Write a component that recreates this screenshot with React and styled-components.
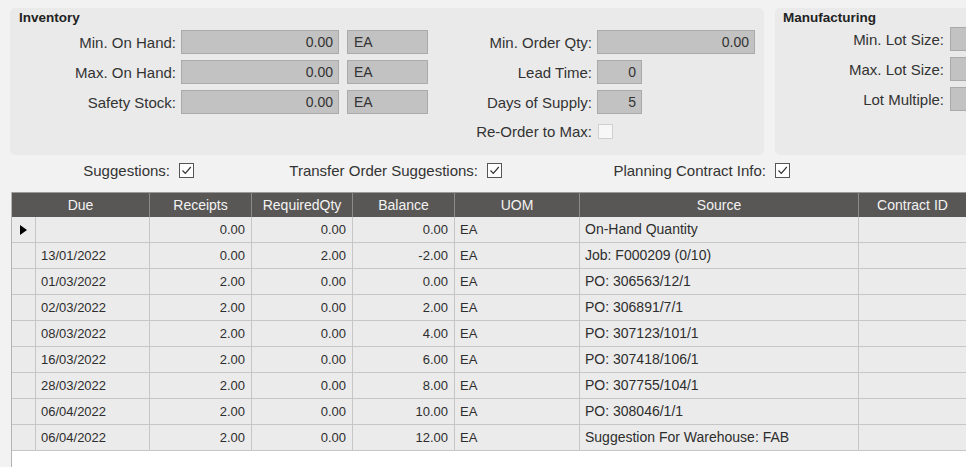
import React from 'react'
import styled, { createGlobalStyle } from 'styled-components'

const GlobalStyle = createGlobalStyle`
    html, body {
        margin: 0;
        padding: 0;
        background: #f2f2f2;
        overflow: hidden;
    }
    body {
        font-family: 'Liberation Sans', Arial, sans-serif;
        color: #333;
    }
`

const Page = styled.div`
    width: 966px;
    height: 467px;
    overflow: hidden;
    display: flex;
    flex-direction: column;
`

const TopRow = styled.div`
    display: flex;
    gap: 11px;
    padding: 8px 0 0 10px;
`

const Panel = styled.div`
    flex: none;
    width: ${({ width }) => width}px;
    height: 147px;
    background: #eaeaea;
    border-radius: 5px;
`

const PanelTitle = styled.div`
    padding: 2px 0 0 ${({ inset }) => inset}px;
    font-size: 13.5px;
    font-weight: 700;
    line-height: 16px;
    color: #222;
`

const PanelBody = styled.div`
    display: flex;
    margin-top: ${({ top }) => top}px;
`

const FieldColumn = styled.div`
    display: flex;
    flex-direction: column;
    gap: 6px;
`

const FieldRow = styled.div`
    display: flex;
    align-items: center;
    height: ${({ short }) => (short ? 22 : 24)}px;
`

const FieldLabel = styled.div`
    flex: none;
    width: ${({ width }) => width}px;
    margin-right: ${({ gap }) => gap}px;
    text-align: right;
    font-size: 15px;
    color: #333;
    white-space: nowrap;
`

const Field = styled.div`
    flex: none;
    box-sizing: border-box;
    width: ${({ width }) => width}px;
    height: 24px;
    margin-right: 8px;
    padding: 0 ${({ align }) => (align === 'left' ? '0 0 6px' : '5px 0 0')};
    border: 1px solid #aaaaaa;
    background: #c2c2c2;
    font-size: 14px;
    line-height: 22px;
    text-align: ${({ align }) => align || 'right'};
    color: #333;
`

const Box = styled.span`
    flex: none;
    box-sizing: border-box;
    display: inline-flex;
    align-items: center;
    justify-content: center;
    width: 15px;
    height: 15px;
    border: 1px solid ${({ disabled }) => (disabled ? '#cfcfcf' : '#555')};
    background: ${({ disabled }) => (disabled ? '#f7f7f7' : '#fff')};
`

const OptionsRow = styled.div`
    display: flex;
    height: 20px;
    margin-top: 5px;
`

const OptionCell = styled.label`
    flex: none;
    width: ${({ width }) => width}px;
    display: flex;
    align-items: center;
    justify-content: flex-end;
    gap: 9px;
    font-size: 15px;
    color: #333;
    white-space: nowrap;
`

const Grid = styled.div`
    margin: 12px 0 0 11px;
    flex: 1;
    background: #fff;
    border-left: 1px solid #b4b4b4;
    display: grid;
    grid-template-columns: 24px 114px 102px 101px 102px 125px 279px 108px;
    grid-auto-rows: 26px;
    grid-template-rows: 25px;
    align-content: start;
`

const HeaderCell = styled.div`
    grid-column: span ${({ span }) => span || 1};
    box-sizing: border-box;
    background: #595755;
    border-right: 1px solid #8a8a8a;
    border-top: 1px solid #9a9a9a;
    color: #f3f3f3;
    font-size: 14px;
    line-height: 24px;
    text-align: center;
    white-space: nowrap;
`

const Cell = styled.div`
    box-sizing: border-box;
    background: #ebebeb;
    border-right: 1px solid #c6c6c6;
    border-bottom: 1px solid #c6c6c6;
    padding: ${({ align }) => (align === 'right' ? '0 6px 0 0' : '0 0 0 5px')};
    font-size: ${({ numeric }) => (numeric ? 13 : 14)}px;
    line-height: 25px;
    text-align: ${({ align }) => align || 'left'};
    color: #2e2e2e;
    white-space: nowrap;
    overflow: hidden;
`

const IndicatorCell = styled(Cell)`
    display: flex;
    align-items: center;
    padding: 0 0 0 8px;
`

const Arrow = styled.span`
    width: 0;
    height: 0;
    border-left: 7px solid #000;
    border-top: 5px solid transparent;
    border-bottom: 5px solid transparent;
`

function CheckBox({ checked, disabled }) {
    return (
        <Box disabled={disabled}>
            {checked && (
                <svg width="13" height="13" viewBox="0 0 13 13">
                    <path d="M2.5 6.5 L5.3 9.3 L10.8 3" fill="none" stroke="#333" strokeWidth="1.2" />
                </svg>
            )}
        </Box>
    )
}

const rows = [
    ['', '0.00', '0.00', '0.00', 'EA', 'On-Hand Quantity'],
    ['13/01/2022', '0.00', '2.00', '-2.00', 'EA', 'Job: F000209 (0/10)'],
    ['01/03/2022', '2.00', '0.00', '0.00', 'EA', 'PO: 306563/12/1'],
    ['02/03/2022', '2.00', '0.00', '2.00', 'EA', 'PO: 306891/7/1'],
    ['08/03/2022', '2.00', '0.00', '4.00', 'EA', 'PO: 307123/101/1'],
    ['16/03/2022', '2.00', '0.00', '6.00', 'EA', 'PO: 307418/106/1'],
    ['28/03/2022', '2.00', '0.00', '8.00', 'EA', 'PO: 307755/104/1'],
    ['06/04/2022', '2.00', '0.00', '10.00', 'EA', 'PO: 308046/1/1'],
    ['06/04/2022', '2.00', '0.00', '12.00', 'EA', 'Suggestion For Warehouse: FAB'],
]

export default function App() {
    return (
        <Page>
            <GlobalStyle />
            <TopRow>
                <Panel width={754}>
                    <PanelTitle inset={9}>Inventory</PanelTitle>
                    <PanelBody top={4}>
                        <FieldColumn>
                            <FieldRow>
                                <FieldLabel width={166} gap={5}>Min. On Hand:</FieldLabel>
                                <Field width={158}>0.00</Field>
                                <Field width={81} align="left">EA</Field>
                            </FieldRow>
                            <FieldRow>
                                <FieldLabel width={166} gap={5}>Max. On Hand:</FieldLabel>
                                <Field width={158}>0.00</Field>
                                <Field width={81} align="left">EA</Field>
                            </FieldRow>
                            <FieldRow>
                                <FieldLabel width={166} gap={5}>Safety Stock:</FieldLabel>
                                <Field width={158}>0.00</Field>
                                <Field width={81} align="left">EA</Field>
                            </FieldRow>
                        </FieldColumn>
                        <FieldColumn>
                            <FieldRow>
                                <FieldLabel width={156} gap={5}>Min. Order Qty:</FieldLabel>
                                <Field width={158}>0.00</Field>
                            </FieldRow>
                            <FieldRow>
                                <FieldLabel width={156} gap={5}>Lead Time:</FieldLabel>
                                <Field width={45}>0</Field>
                            </FieldRow>
                            <FieldRow>
                                <FieldLabel width={156} gap={5}>Days of Supply:</FieldLabel>
                                <Field width={45}>5</Field>
                            </FieldRow>
                            <FieldRow short>
                                <FieldLabel width={156} gap={6}>Re-Order to Max:</FieldLabel>
                                <CheckBox disabled />
                            </FieldRow>
                        </FieldColumn>
                    </PanelBody>
                </Panel>
                <Panel width={220}>
                    <PanelTitle inset={8}>Manufacturing</PanelTitle>
                    <PanelBody top={1}>
                        <FieldColumn>
                            <FieldRow>
                                <FieldLabel width={169} gap={6}>Min. Lot Size:</FieldLabel>
                                <Field width={60} />
                            </FieldRow>
                            <FieldRow>
                                <FieldLabel width={169} gap={6}>Max. Lot Size:</FieldLabel>
                                <Field width={60} />
                            </FieldRow>
                            <FieldRow>
                                <FieldLabel width={169} gap={6}>Lot Multiple:</FieldLabel>
                                <Field width={60} />
                            </FieldRow>
                        </FieldColumn>
                    </PanelBody>
                </Panel>
            </TopRow>

            <OptionsRow>
                <OptionCell width={194}>Suggestions: <CheckBox checked /></OptionCell>
                <OptionCell width={308}>Transfer Order Suggestions: <CheckBox checked /></OptionCell>
                <OptionCell width={288}>Planning Contract Info: <CheckBox checked /></OptionCell>
            </OptionsRow>

            <Grid>
                <HeaderCell span={2}>Due</HeaderCell>
                <HeaderCell>Receipts</HeaderCell>
                <HeaderCell>RequiredQty</HeaderCell>
                <HeaderCell>Balance</HeaderCell>
                <HeaderCell>UOM</HeaderCell>
                <HeaderCell>Source</HeaderCell>
                <HeaderCell>Contract ID</HeaderCell>
                {rows.map((row, index) => (
                    <React.Fragment key={index}>
                        <IndicatorCell>{index === 0 && <Arrow />}</IndicatorCell>
                        <Cell numeric>{row[0]}</Cell>
                        <Cell numeric align="right">{row[1]}</Cell>
                        <Cell numeric align="right">{row[2]}</Cell>
                        <Cell numeric align="right">{row[3]}</Cell>
                        <Cell numeric>{row[4]}</Cell>
                        <Cell>{row[5]}</Cell>
                        <Cell />
                    </React.Fragment>
                ))}
            </Grid>
        </Page>
    )
}
